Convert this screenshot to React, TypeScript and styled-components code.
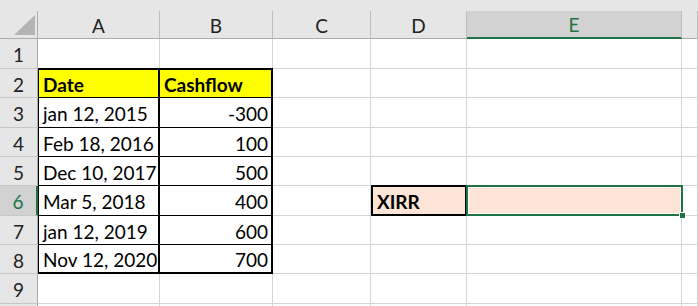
import React from "react";
import styled, { createGlobalStyle } from "styled-components";

const GREEN = "#217346";
const GRID = "#d4d4d4";
const HEAD_BG = "#e6e6e6";
const HEAD_ACTIVE = "#d2d2d2";
const HEAD_LINE = "#ababab";

const Global = createGlobalStyle`
  html, body {
    margin: 0;
    padding: 0;
    overflow: hidden;
    background: #fff;
  }
  body {
    font-family: Lato, "Open Sans", sans-serif;
  }
`;

type Line = 0 | 1 | 2;

interface CellData {
  text?: string;
  bold?: boolean;
  right?: boolean;
  fill?: string;
  top?: Line;
  left?: Line;
  r?: Line;
  b?: Line;
  selected?: boolean;
}

const YELLOW = "#ffff00";
const PEACH = "#fce4d6";

const dates = ["jan 12, 2015", "Feb 18, 2016", "Dec 10, 2017", "Mar 5, 2018", "jan 12, 2019", "Nov 12, 2020"];
const flows = ["-300", "100", "500", "400", "600", "700"];

function buildRow(n: number): CellData[] {
  const row: CellData[] = [{}, {}, {}, {}, {}, {}];
  if (n === 2) {
    row[0] = { text: "Date", bold: true, fill: YELLOW, top: 2, left: 1, r: 2, b: 1 };
    row[1] = { text: "Cashflow", bold: true, fill: YELLOW, top: 2, r: 2, b: 1 };
  }
  if (n >= 3 && n <= 8) {
    const last = n === 8 ? 2 : 1;
    row[0] = { text: dates[n - 3], left: 1, r: 2, b: last };
    row[1] = { text: flows[n - 3], right: true, r: 2, b: last };
  }
  if (n === 6) {
    row[3] = { text: "XIRR", bold: true, fill: PEACH, top: 2, left: 2, r: 2, b: 2 };
    row[4] = { fill: PEACH, selected: true };
  }
  return row;
}

// row 10 only peeks in at the bottom edge, so its number stays hidden
const rows = [1, 2, 3, 4, 5, 6, 7, 8, 9, 10];
const cols = ["A", "B", "C", "D", "E", ""];
const ACTIVE_COL = "E";
const ACTIVE_ROW = 6;

export default function App() {
  return (
    <>
      <Global />
      <Sheet>
        <TopBand />
        <Corner>
          <svg width="21" height="20" viewBox="0 0 21 20">
            <polygon points="21,0 21,20 0,20" fill="#b4b4b4" />
          </svg>
        </Corner>
        {cols.map((c, i) => (
          <ColHeader key={i} $active={c === ACTIVE_COL}>
            {c}
          </ColHeader>
        ))}
        {rows.map((n) => (
          <React.Fragment key={n}>
            <RowHeader $active={n === ACTIVE_ROW}>{n < 10 ? n : ""}</RowHeader>
            {buildRow(n).map((cell, i) => (
              <Cell
                key={i}
                $bold={cell.bold}
                $right={cell.right}
                $fill={cell.fill}
                $top={cell.top || 0}
                $left={cell.left || 0}
                $r={cell.r || 0}
                $b={cell.b || 0}
              >
                {cell.text}
                {cell.selected && (
                  <Selection>
                    <FillHandle />
                  </Selection>
                )}
              </Cell>
            ))}
          </React.Fragment>
        ))}
      </Sheet>
    </>
  );
}

const Sheet = styled.div`
  display: grid;
  grid-template-columns: 38px 122px 113px 98px 96px 215px 1fr;
  grid-template-rows: 11px 28px 30px 29px 30px 29px 29px 30px 29px 29px 30px 2px;
  width: 698px;
  height: 306px;
  overflow: hidden;
  font-size: 19px;
  color: #000;
`;

const TopBand = styled.div`
  grid-column: 1 / -1;
  background: ${HEAD_BG};
`;

const Corner = styled.div`
  background: ${HEAD_BG};
  border-right: 1px solid ${HEAD_LINE};
  border-bottom: 1px solid ${HEAD_LINE};
  display: flex;
  align-items: flex-end;
  justify-content: flex-end;
  padding: 0 2px 3px 0;
  svg {
    display: block;
  }
`;

const ColHeader = styled.div<{ $active?: boolean }>`
  background: ${({ $active }) => ($active ? HEAD_ACTIVE : HEAD_BG)};
  border-right: 1px solid #bdbdbd;
  border-bottom: ${({ $active }) => ($active ? `2px solid ${GREEN}` : `1px solid ${HEAD_LINE}`)};
  color: ${({ $active }) => ($active ? GREEN : "#222")};
  display: flex;
  align-items: center;
  justify-content: center;
  padding-top: 1px;
  &:last-child {
    border-right: none;
  }
`;

const RowHeader = styled.div<{ $active?: boolean }>`
  background: ${({ $active }) => ($active ? HEAD_ACTIVE : HEAD_BG)};
  border-right: ${({ $active }) => ($active ? `2px solid ${GREEN}` : `1px solid ${HEAD_LINE}`)};
  border-bottom: 1px solid #c8c8c8;
  color: ${({ $active }) => ($active ? GREEN : "#222")};
  display: flex;
  align-items: center;
  justify-content: center;
  padding-top: 2px;
`;

const Cell = styled.div<{
  $bold?: boolean;
  $right?: boolean;
  $fill?: string;
  $top: Line;
  $left: Line;
  $r: Line;
  $b: Line;
}>`
  position: relative;
  display: flex;
  align-items: center;
  justify-content: ${({ $right }) => ($right ? "flex-end" : "flex-start")};
  padding: 2px 3px 0 4px;
  background: ${({ $fill }) => $fill || "#fff"};
  font-weight: ${({ $bold }) => ($bold ? 700 : 400)};
  white-space: nowrap;
  border-right: ${({ $r }) => ($r ? `${$r}px solid #000` : `1px solid ${GRID}`)};
  border-bottom: ${({ $b }) => ($b ? `${$b}px solid #000` : `1px solid ${GRID}`)};
  border-top: ${({ $top }) => ($top ? `${$top - 1}px solid #000` : "none")};
  border-left: ${({ $left }) => ($left ? `${$left}px solid #000` : "none")};
  box-shadow: ${({ $top }) => ($top ? "0 -1px 0 0 #000" : "none")};
`;

const Selection = styled.div`
  position: absolute;
  top: -1px;
  left: -1px;
  right: -2px;
  bottom: -1px;
  border: 2px solid ${GREEN};
  box-shadow: inset 0 0 0 1px #fff;
  z-index: 2;
`;

const FillHandle = styled.div`
  position: absolute;
  right: -5px;
  bottom: -5px;
  width: 5px;
  height: 5px;
  background: ${GREEN};
  border: 1px solid #fff;
`;
